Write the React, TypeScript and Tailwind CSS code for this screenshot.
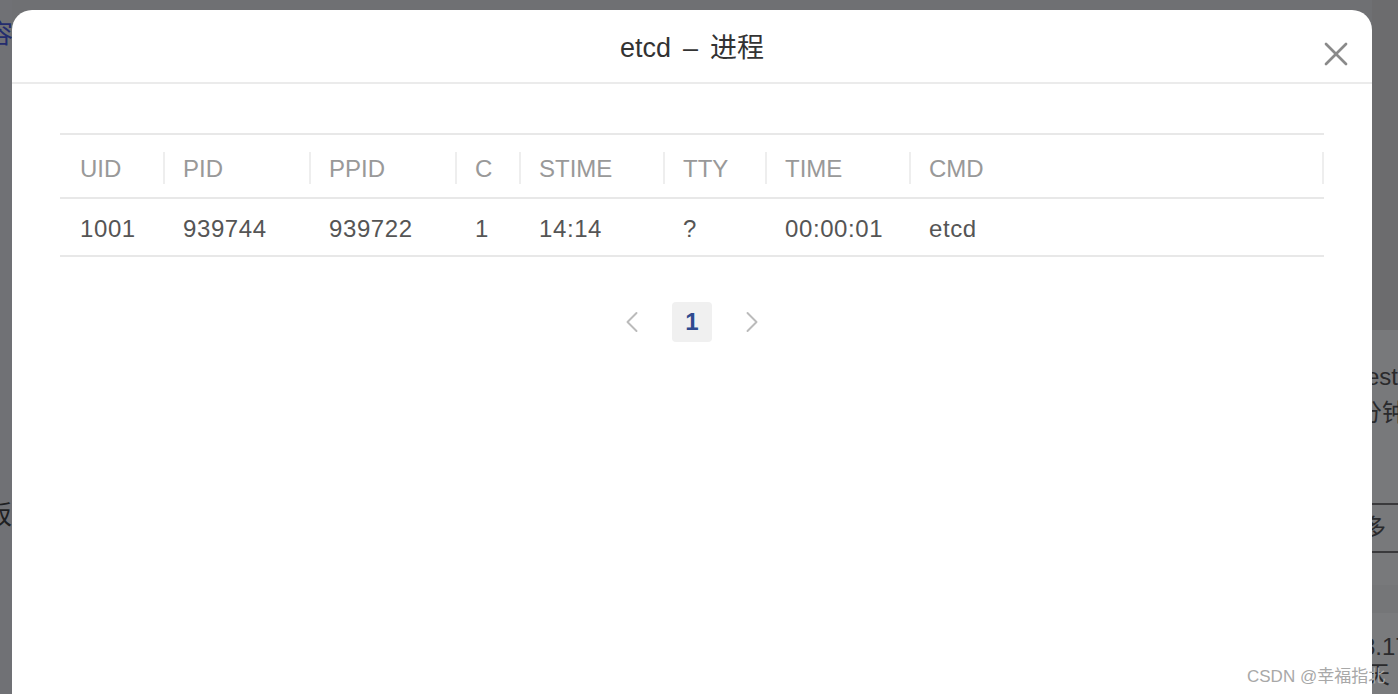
import { ChevronLeft, ChevronRight, X } from "lucide-react";

const columns = [
  { key: "UID", width: "w-[103px]" },
  { key: "PID", width: "w-[146px]" },
  { key: "PPID", width: "w-[146px]" },
  { key: "C", width: "w-[64px]" },
  { key: "STIME", width: "w-[144px]" },
  { key: "TTY", width: "w-[102px]" },
  { key: "TIME", width: "w-[144px]" },
  { key: "CMD", width: "flex-1" },
];

const rows = [
  ["1001", "939744", "939722", "1", "14:14", "?", "00:00:01", "etcd"],
];

const font = { fontFamily: '"Liberation Sans", "Noto Sans CJK SC", sans-serif' };

export default function App() {
  return (
    <div
      className="relative h-[694px] w-[1398px] overflow-hidden bg-[#6f7073]"
      style={font}
    >
      {/* page behind the backdrop */}
      <div className="flex h-full">
        <div className="flex w-[12px] flex-col overflow-hidden bg-[#707175]">
          <div className="-ml-[13px] mt-[19px] whitespace-nowrap text-[26px] leading-[30px] text-[#232c6e]">
            容
          </div>
          <div className="-ml-[14px] mt-[451px] whitespace-nowrap text-[26px] leading-[30px] text-[#1e1f22]">
            板
          </div>
        </div>
        <div className="flex-1" />
        <div className="flex w-[26px] flex-col overflow-hidden">
          <div className="h-[330px] bg-[#6c6c6e]" />
          <div className="flex h-[173px] flex-col bg-[#78797b] pt-[32px] text-[24px] text-[#2a2a2c]">
            <div className="-ml-[6px] whitespace-nowrap leading-[30px]">est</div>
            <div className="-ml-[14px] mt-[6px] whitespace-nowrap leading-[30px]">分钟</div>
          </div>
          <div className="flex h-[50px] items-center border-y-2 border-[#3a3a3c] bg-[#78797b] text-[24px] text-[#2a2a2c]">
            <div className="-ml-[10px] whitespace-nowrap">多</div>
          </div>
          <div className="h-[32px] bg-[#78797b]" />
          <div className="h-[28px] bg-[#757678]" />
          <div className="flex flex-1 flex-col bg-[#7a7b7d] pt-[20px] text-[24px] text-[#2a2a2c]">
            <div className="-ml-[10px] whitespace-nowrap leading-[28px]">3.17</div>
            <div className="-ml-[6px] whitespace-nowrap leading-[28px]">天</div>
          </div>
        </div>
      </div>

      {/* modal */}
      <div className="absolute left-[12px] top-[10px] flex h-[720px] w-[1360px] flex-col rounded-t-[20px] bg-white">
        <div className="relative flex h-[74px] items-center justify-center border-b-2 border-[#ebebeb] pt-[4px]">
          <h2 className="whitespace-nowrap text-[27px] text-[#333333]">
            etcd<span className="mx-[12px]">–</span>进程
          </h2>
          <button className="absolute right-[16px] top-[24px] text-[#8a8a8a]">
            <X size={40} strokeWidth={1.6} />
          </button>
        </div>

        <div className="px-[48px] pt-[49px]">
          <div className="border-t-2 border-[#e8e8e8]">
            <div className="flex h-[64px] items-center border-b-2 border-[#e8e8e8]">
              {columns.map((c, i) => (
                <div
                  key={c.key}
                  className={`${c.width} relative flex h-full items-center pl-[20px] pt-[6px] text-[24px] text-[#999999]`}
                >
                  {i > 0 && (
                    <span className="absolute left-0 top-[17px] h-[32px] w-[2px] bg-[#eeeeee]" />
                  )}
                  {c.key}
                  {i === columns.length - 1 && (
                    <span className="absolute right-0 top-[17px] h-[32px] w-[2px] bg-[#eeeeee]" />
                  )}
                </div>
              ))}
            </div>
            {rows.map((r, ri) => (
              <div
                key={ri}
                className="flex h-[58px] items-center border-b-2 border-[#e8e8e8] pt-[3px]"
              >
                {r.map((v, i) => (
                  <div
                    key={i}
                    className={`${columns[i].width} pl-[20px] text-[24px] tracking-[0.6px] text-[#555555]`}
                  >
                    {v}
                  </div>
                ))}
              </div>
            ))}
          </div>

          <div className="mt-[45px] flex items-center justify-center gap-[22px]">
            <button className="flex h-[40px] w-[36px] items-center justify-center text-[#bbbbbb]">
              <ChevronLeft size={36} strokeWidth={1.3} />
            </button>
            <button className="flex h-[40px] w-[40px] items-center justify-center rounded-[4px] bg-[#f0f0f0] text-[24px] font-bold text-[#2f4a8f]">
              1
            </button>
            <button className="flex h-[40px] w-[36px] items-center justify-center text-[#bbbbbb]">
              <ChevronRight size={36} strokeWidth={1.3} />
            </button>
          </div>
        </div>
      </div>

      {/* watermark */}
      <div className="absolute left-[1247px] top-[664px] whitespace-nowrap text-[17px] text-[#a8a8a8]">
        CSDN @幸福指北
      </div>
    </div>
  );
}
